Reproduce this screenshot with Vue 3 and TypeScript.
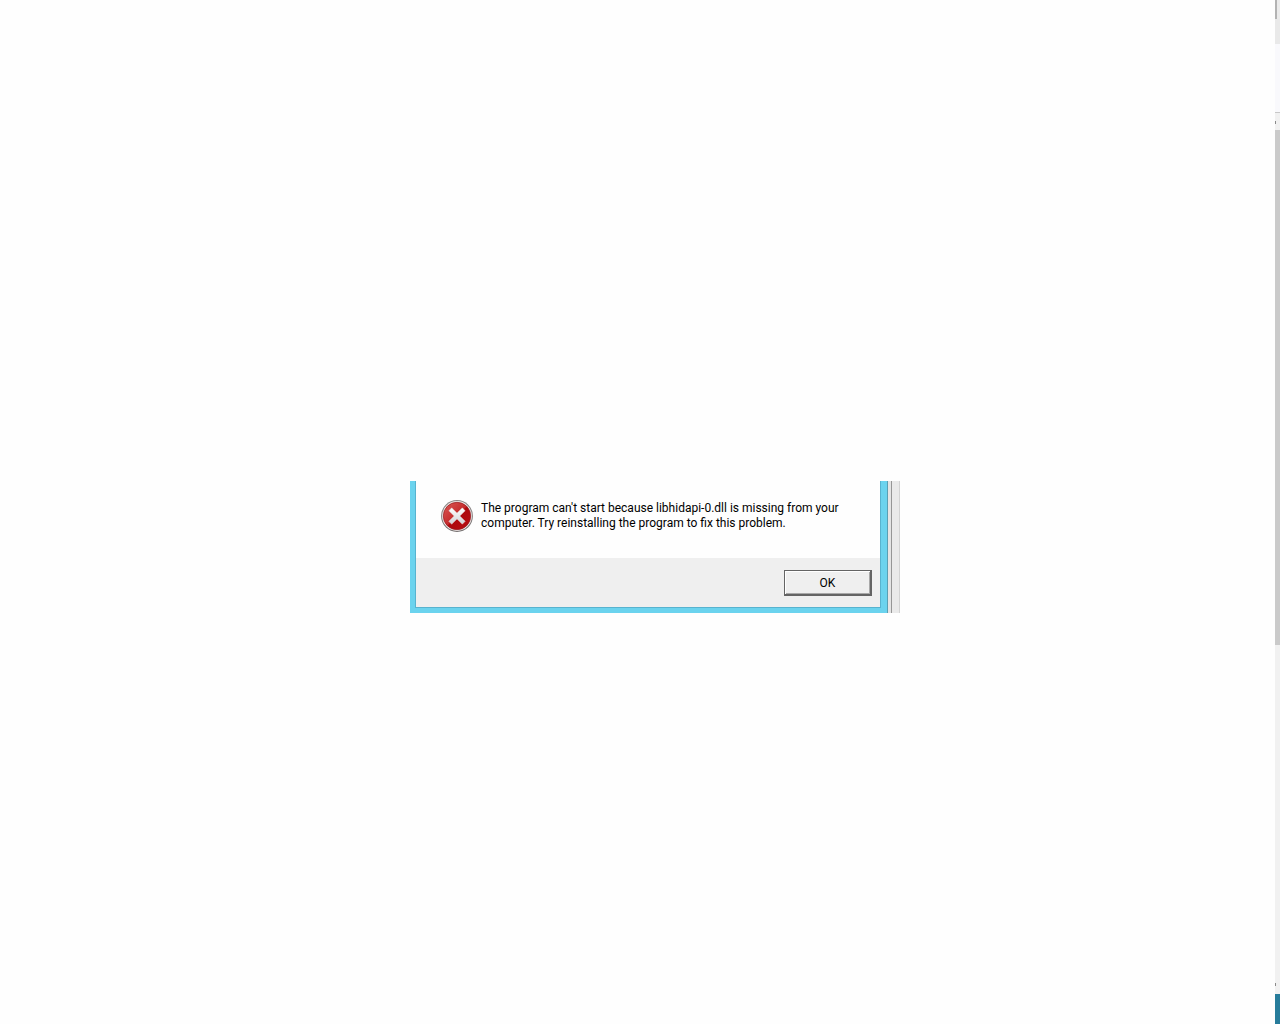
<script setup lang="ts">
import { ref } from 'vue'

const message: string[] = [
  "The program can't start because libhidapi-0.dll is missing from your",
  'computer. Try reinstalling the program to fix this problem.',
]
const open = ref(true)
</script>

<template>
  <div class="desktop">
    <main class="stage">
      <div v-if="open" class="capture">
        <section class="dialog" role="alertdialog" aria-describedby="error-message">
          <div class="body">
            <svg class="icon" viewBox="0 0 32 32" aria-hidden="true">
              <defs>
                <linearGradient id="rim" x1="0" y1="0" x2="0" y2="1">
                  <stop offset="0" stop-color="#8b8585" />
                  <stop offset="1" stop-color="#757070" />
                </linearGradient>
                <linearGradient id="disc" x1="0" y1="0" x2="1" y2="1">
                  <stop offset="0" stop-color="#dc5a56" />
                  <stop offset="0.48" stop-color="#c52c2d" />
                  <stop offset="0.52" stop-color="#ad090d" />
                  <stop offset="1" stop-color="#b90f14" />
                </linearGradient>
                <linearGradient id="cross" x1="0" y1="0" x2="0" y2="1">
                  <stop offset="0" stop-color="#ffffff" />
                  <stop offset="1" stop-color="#d2d2d6" />
                </linearGradient>
              </defs>
              <circle cx="16" cy="16" r="15.9" fill="url(#rim)" />
              <circle cx="16" cy="16" r="14.9" fill="#eee9e8" />
              <circle cx="16" cy="16" r="13.7" fill="url(#disc)" stroke="#96191c" stroke-width="0.7" />
              <path
                d="M10.7 7.8 16 13.1 21.3 7.8 24.2 10.7 18.9 16 24.2 21.3 21.3 24.2 16 18.9 10.7 24.2 7.8 21.3 13.1 16 7.8 10.7Z"
                fill="url(#cross)"
                stroke="#e4c5c5"
                stroke-width="0.5"
                stroke-linejoin="round"
              />
            </svg>
            <p id="error-message" class="message">
              <span v-for="line in message" :key="line" class="line">{{ line }}</span>
            </p>
          </div>
          <footer class="actions">
            <button type="button" class="ok" @click="open = false">OK</button>
          </footer>
        </section>
        <div class="behind"></div>
      </div>
    </main>
    <aside class="edge" aria-hidden="true">
      <div class="tab"></div>
      <div class="toolbar"></div>
      <div class="panel"></div>
      <div class="arrow"></div>
      <div class="thumb"></div>
      <div class="track"></div>
      <div class="arrow bottom"></div>
      <div class="taskbar"></div>
    </aside>
  </div>
</template>

<style>
body {
  margin: 0;
  background: #fefefe;
}
</style>

<style scoped>
.desktop {
  display: flex;
  min-height: 100vh;
  font-family: Roboto, "Open Sans", sans-serif;
  font-size: 12px;
  line-height: 15px;
  color: #000;
}

.stage {
  flex: 1;
  display: flex;
  align-items: center;
  justify-content: center;
  padding: 70px 0 0 35px;
}

.capture {
  display: flex;
  width: 490px;
}

.dialog {
  flex: 1;
  border: solid #6bd3ee;
  border-width: 0 6px 5px 5px;
}

.body {
  display: flex;
  align-items: flex-end;
  gap: 8px;
  padding: 19px 25px 26px;
  border: solid #58b3cf;
  border-width: 0 1px;
}

.icon {
  flex: none;
  width: 32px;
  height: 32px;
}

.message {
  margin: 0;
  padding-bottom: 1px;
  white-space: nowrap;
}

.line {
  display: block;
}

.actions {
  display: flex;
  justify-content: flex-end;
  padding: 12px 8px 11px;
  border: solid #58b3cf;
  border-width: 0 1px 1px;
  background: #efefef;
}

.ok {
  box-sizing: border-box;
  width: 88px;
  height: 26px;
  padding: 2px 0 0;
  border: solid #646464;
  border-width: 1px 2px 2px 1px;
  border-radius: 0;
  background: #efefef;
  box-shadow: inset 1px 1px #fff, inset -1px -1px #a8a8a8;
  font: inherit;
  color: inherit;
}

.behind {
  flex: none;
  box-sizing: border-box;
  width: 13px;
  border-left: 1px solid #5a9fb3;
  border-right: 1px solid #d3d3d3;
  background: linear-gradient(to right, #e4e4e4 3px, #969696 3px 4px, #eaeaea 4px);
}

.edge {
  display: flex;
  flex-direction: column;
  width: 5px;
  background: #f1f1f1;
}

.tab {
  height: 19px;
  background: linear-gradient(to right, #b3b3b3 2px, #ebebeb 2px);
}

.toolbar {
  height: 25px;
  background: #e9e9e9;
}

.panel {
  height: 68px;
  border-bottom: 1px solid #c8c8c8;
  background: #f9f9fc;
}

.arrow {
  height: 17px;
  background: linear-gradient(#8a8a8a, #8a8a8a) 0 8px / 1px 3px no-repeat;
}

.bottom {
  background-position: 0 6px;
}

.thumb {
  flex: 515;
  background: #cacaca;
}

.track {
  flex: 332;
}

.taskbar {
  height: 30px;
  background: #277c9b;
}
</style>
